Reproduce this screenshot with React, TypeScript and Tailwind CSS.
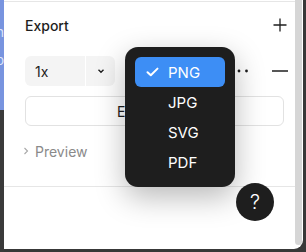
import React from "react";

export default function App() {
  const items = ["PNG", "JPG", "SVG", "PDF"];
  return (
    <div
      className="w-[306px] h-[252px] bg-[#383838] flex overflow-hidden"
      style={{ fontFamily: "Inter, 'Noto Sans', sans-serif" }}
    >
      <div className="w-[4px] flex flex-col shrink-0 overflow-hidden">
        <div className="h-[110px] bg-[#7894df] relative overflow-hidden">
          <span className="absolute right-0 top-[26px] text-[13px] leading-none text-[#dfe6fa]">n</span>
          <span className="absolute right-0 top-[54px] text-[13px] leading-none text-[#dfe6fa]">o</span>
        </div>
        <div className="flex-1 bg-[#3a3a3a]" />
      </div>
      <div className="w-[299px] h-[249px] bg-white rounded-br-[9px] relative flex overflow-hidden">
        <div className="flex-1 flex flex-col">
          <div className="h-[1px] bg-[#e6e6e6] mt-[1px]" />
          <div className="flex items-center justify-between pl-[21px] pr-[8px] h-[50px] -mt-[2px]">
            <span className="text-[14px] font-medium text-[#1e1e1e]">Export</span>
            <svg width="16" height="16" viewBox="0 0 16 16" className="mr-[-1px]">
              <path d="M8 1.5v13M1.5 8h13" stroke="#1e1e1e" strokeWidth="1.3" />
            </svg>
          </div>
          <div className="flex items-center pl-[21px] pr-[7px] h-[30px] mt-[6px]">
            <div className="w-[90px] h-[30px] bg-[#f4f4f4] rounded-[6px] flex items-center">
              <span className="w-[60px] pl-[10px] text-[14px] text-[#1e1e1e]">1x</span>
              <div className="w-[1px] h-full bg-white" />
              <div className="flex-1 flex items-center justify-center">
                <svg width="8" height="6" viewBox="0 0 8 6">
                  <path d="M1.5 1.8L4 4.2L6.5 1.8" stroke="#1e1e1e" strokeWidth="1.4" fill="none" />
                </svg>
              </div>
            </div>
            <div className="flex-1" />
            <svg width="22" height="6" viewBox="0 0 22 6" className="mr-[22px]">
              <circle cx="3" cy="3" r="1.4" fill="#1e1e1e" />
              <circle cx="11" cy="3" r="1.4" fill="#1e1e1e" />
              <circle cx="18.5" cy="3" r="1.4" fill="#1e1e1e" />
            </svg>
            <svg width="16" height="4" viewBox="0 0 16 4">
              <path d="M0 2h16" stroke="#1e1e1e" strokeWidth="1.3" />
            </svg>
          </div>
          <div className="ml-[21px] mr-[11px] mt-[10px] h-[30px] border border-[#e2e2e2] rounded-[6px] flex items-center pl-[91px]">
            <span className="text-[14px] text-[#1e1e1e]">Export Frame</span>
          </div>
          <div className="flex items-center pl-[19px] h-[20px] mt-[15px]">
            <svg width="6" height="8" viewBox="0 0 6 8">
              <path d="M1.5 1L4.5 4L1.5 7" stroke="#a8a8a8" strokeWidth="1.1" fill="none" />
            </svg>
            <span className="ml-[6px] text-[14px] text-[#8a8a8a]">Preview</span>
          </div>
          <div className="h-[1px] bg-[#e6e6e6] mt-[25px]" />
          <div className="flex-1" />
        </div>
        <div className="w-[8px] shrink-0 flex flex-col pr-[1px]">
          <div className="h-[245px] bg-[#d6d6d6] rounded-b-[4px]" />
        </div>

        <div className="absolute left-[121px] top-[47px] w-[110px] bg-[#1e1e1e] rounded-[13px] py-[10px] shadow-[0_10px_30px_rgba(0,0,0,0.28)] flex flex-col">
          {items.map((it, i) => (
            <div
              key={it}
              className={
                "mx-[10px] h-[30px] flex items-center rounded-[6px] " +
                (i === 0 ? "bg-[#3d8ef5]" : "")
              }
            >
              <div className="w-[33px] flex justify-center pl-[2px]">
                {i === 0 && (
                  <svg width="13" height="10" viewBox="0 0 13 10">
                    <path d="M1.5 5.2L4.8 8.3L11.5 1.6" stroke="white" strokeWidth="2" fill="none" strokeLinecap="round" strokeLinejoin="round" />
                  </svg>
                )}
              </div>
              <span className="text-[15px] text-white leading-none">{it}</span>
            </div>
          ))}
        </div>

        <div className="absolute left-[232px] top-[183px] w-[38px] h-[38px] rounded-full bg-[#1e1e1e] flex items-center justify-center">
          <span className="text-[20px] font-light text-white leading-none">?</span>
        </div>
      </div>
      <div className="flex-1" />
    </div>
  );
}
